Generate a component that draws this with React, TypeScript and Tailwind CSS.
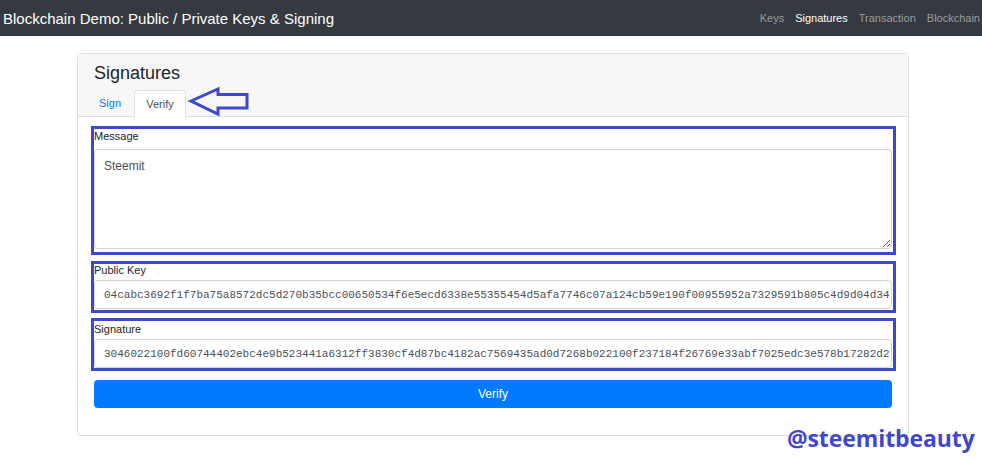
const PUBLIC_KEY =
  "04cabc3692f1f7ba75a8572dc5d270b35bcc00650534f6e5ecd6338e55355454d5afa7746c07a124cb59e190f00955952a7329591b805c4d9d04d34a1b2c3";
const SIGNATURE =
  "3046022100fd60744402ebc4e9b523441a6312ff3830cf4d87bc4182ac7569435ad0d7268b022100f237184f26769e33abf7025edc3e578b17282d2a9c41e07";

const NAV = ["Keys", "Signatures", "Transaction", "Blockchain"];

function Navbar() {
  return (
    <nav className="flex h-9 items-center justify-between bg-[#343a40] pl-[3px] pr-[2px]">
      <span className="text-[15px] leading-none text-white">Blockchain Demo: Public / Private Keys &amp; Signing</span>
      <div className="flex gap-[11px] text-[11px]">
        {NAV.map((n) => (
          <a key={n} className={n === "Signatures" ? "text-white" : "text-[#9a9da0]"}>
            {n}
          </a>
        ))}
      </div>
    </nav>
  );
}

// outlined arrow pointing at the active tab
function Arrow() {
  return (
    <svg className="absolute left-[187px] top-[86px]" width="64" height="31" viewBox="0 0 64 31">
      <path
        d="M4 15 L31 3 L31 8.5 L60 8.5 L60 22 L31 22 L31 28 Z"
        fill="none"
        stroke="#3f48cc"
        strokeWidth="3"
        strokeLinejoin="miter"
      />
    </svg>
  );
}

function Field({
  label,
  children,
  top,
  gap,
  bottom,
}: {
  label: string;
  children: React.ReactNode;
  top: string;
  gap: string;
  bottom: string;
}) {
  return (
    <div className={`-ml-[3px] -mr-[4px] border-[3px] border-[#3f48cc] pr-[1px] ${bottom}`}>
      <div className={`${top} text-[11px] leading-[13px] text-[#212529]`}>{label}</div>
      <div className={gap}>{children}</div>
    </div>
  );
}

const inputCls =
  "block h-[29px] w-full rounded-[4px] border border-[#d3d3d3] pl-[9px] pr-[2px] font-['Liberation_Mono',monospace] text-[11px] text-[#495057] outline-none";

export default function App() {
  return (
    <div className="relative h-[461px] w-[982px] bg-white font-['Liberation_Sans',Arial,sans-serif]">
      <Navbar />
      <div className="ml-[77px] mt-[17px] w-[832px] rounded-[4px] border border-[#dfdfdf]">
        <div className="border-b border-[#dfdfdf] bg-[#f7f7f7] px-4 pt-2">
          <h2 className="text-[18px] leading-[22px] text-[#212529]">Signatures</h2>
          <div className="mt-[6px] flex text-[11px]">
            <a className="-mb-px flex h-[27px] w-[40px] items-center pl-[5px] text-[#007bff]">Sign</a>
            <a className="-mb-px flex h-[27px] w-[52px] items-center justify-center rounded-t-[4px] border border-b-0 border-[#dfdfdf] bg-white text-[#495057]">
              Verify
            </a>
          </div>
        </div>
        <div className="flex flex-col px-4 pb-[27px] pt-[9px]">
          <Field label="Message" top="pt-[1px]" gap="mt-[6px]" bottom="pb-[3px]">
            <textarea
              defaultValue="Steemit"
              className="block h-[100px] w-full rounded-[4px] border border-[#d3d3d3] px-[9px] pt-[7px] text-[12px] text-[#495057] outline-none"
            />
          </Field>
          <div className="mt-[6px]">
            <Field label="Public Key" top="pt-0" gap="mt-[3px]" bottom="pb-[1px]">
              <input readOnly value={PUBLIC_KEY} className={inputCls} />
            </Field>
          </div>
          <div className="mt-[5px]">
            <Field label="Signature" top="pt-[2px]" gap="mt-[3px]" bottom="pb-0">
              <input readOnly value={SIGNATURE} className={inputCls} />
            </Field>
          </div>
          <button className="mt-[9px] h-[28px] w-full rounded-[4px] bg-[#007bff] text-[12px] text-white">Verify</button>
        </div>
      </div>
      <Arrow />
      <div className="absolute left-[787px] top-[423px] font-['Open_Sans',sans-serif] text-[23px] font-bold leading-[30px] tracking-[-0.1px] text-[#3f48cc]">
        @steemitbeauty
      </div>
    </div>
  );
}
